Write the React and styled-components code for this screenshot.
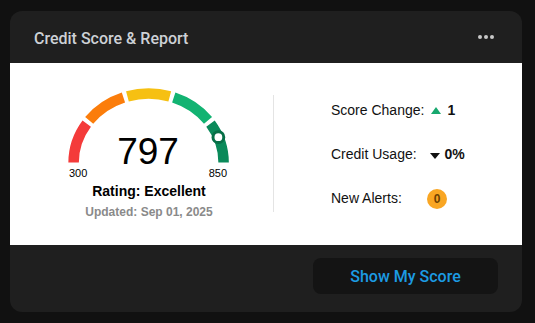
import React from "react";
import styled, { createGlobalStyle } from "styled-components";

const GlobalStyle = createGlobalStyle`
  html, body { margin: 0; padding: 0; background: #111111; }
  body { font-family: "Liberation Sans", Arial, sans-serif; }
  * { box-sizing: border-box; }
`;

const Page = styled.div`
  padding: 11px 13px 11px 10px;
`;

const Card = styled.section`
  width: 512px;
  height: 301px;
  background: #1f1f1f;
  border-radius: 12px;
  overflow: hidden;
  display: flex;
  flex-direction: column;
`;

const Header = styled.header`
  height: 52px;
  flex: none;
  display: flex;
  align-items: center;
  justify-content: space-between;
  padding: 0 28px 0 24px;
`;

const Title = styled.h2`
  margin: 0;
  padding-top: 3px;
  font-family: Roboto, "Liberation Sans", sans-serif;
  font-size: 16px;
  font-weight: 500;
  color: #cdd1d6;
`;

const MoreButton = styled.button`
  display: flex;
  gap: 2px;
  padding: 0;
  border: none;
  background: transparent;
  cursor: pointer;
`;

const Dot = styled.span`
  width: 4px;
  height: 4px;
  border-radius: 50%;
  background: #c8c8c8;
`;

const Body = styled.div`
  height: 182px;
  flex: none;
  background: #ffffff;
  display: flex;
  align-items: flex-start;
  padding-left: 54px;
`;

const GaugeBlock = styled.div`
  width: 170px;
  margin-top: 19px;
  display: flex;
  flex-direction: column;
  align-items: center;
`;

const GaugeWrap = styled.div`
  position: relative;
  width: 170px;
  height: 82px;
`;

const ScoreValue = styled.div`
  position: absolute;
  left: 0;
  right: 2px;
  top: 51px;
  text-align: center;
  font-size: 37px;
  line-height: 37px;
  color: #000;
`;

const RangeRow = styled.div`
  width: 100%;
  margin-top: 2px;
  display: flex;
  justify-content: space-between;
  padding: 0 7px 0 5px;
  font-size: 11px;
  line-height: 14px;
  color: #000;
`;

const Rating = styled.div`
  margin-top: 3px;
  font-size: 14px;
  line-height: 17px;
  font-weight: 700;
  color: #000;
`;

const Updated = styled.div`
  margin-top: 5px;
  font-size: 12px;
  line-height: 15px;
  font-weight: 700;
  color: #8a8a8a;
`;

const Divider = styled.div`
  width: 1px;
  height: 117px;
  margin: 32px 0 0 39px;
  background: #e4e4e4;
`;

const Stats = styled.div`
  margin: 37px 0 0 57px;
  display: grid;
  grid-template-columns: 96px auto;
  grid-auto-rows: 20px;
  row-gap: 24px;
  align-items: center;
  font-size: 14px;
  line-height: 20px;
  color: #111;
`;

const Label = styled.span``;

const Value = styled.span`
  font-weight: 700;
  white-space: nowrap;
`;

const Triangle = styled.span`
  display: inline-block;
  width: 0;
  height: 0;
  vertical-align: baseline;
  border-left: 5.5px solid transparent;
  border-right: 5.5px solid transparent;
  ${(p) =>
    p.$up
      ? `border-bottom: 7px solid #17a86e; margin: 0 7px 1px 3.5px;`
      : `border-top: 6px solid #111; margin: 0 5px 0 2.5px;`}
`;

const Badge = styled.span`
  display: inline-flex;
  align-items: center;
  justify-content: center;
  width: 20px;
  height: 20px;
  border-radius: 50%;
  background: #f9a623;
  color: #6e3f00;
  font-size: 12px;
  font-weight: 700;
`;

const Footer = styled.footer`
  flex: 1;
  display: flex;
  justify-content: flex-end;
  align-items: flex-start;
  padding: 13px 24px 0 0;
`;

const ShowButton = styled.button`
  width: 185px;
  height: 36px;
  border: none;
  border-radius: 8px;
  background: #141414;
  color: #1c9be3;
  font-family: Roboto, "Liberation Sans", sans-serif;
  font-size: 16px;
  font-weight: 500;
  cursor: pointer;
`;

const CX = 84.6;
const CY = 80.5;
const RX = 75;
const RY = 69;

const pt = (deg) => {
  const r = (deg * Math.PI) / 180;
  return [CX + RX * Math.cos(r), CY - RY * Math.sin(r)];
};

const arcPath = (a, b) => {
  const [x1, y1] = pt(a);
  const [x2, y2] = pt(b);
  return `M ${x1.toFixed(2)} ${y1.toFixed(2)} A ${RX} ${RY} 0 0 1 ${x2.toFixed(2)} ${y2.toFixed(2)}`;
};

const SEGMENTS = [
  { from: 180, to: 145.6, color: "#f43b3a" },
  { from: 142.4, to: 109.6, color: "#fb7d0b" },
  { from: 106.4, to: 73.6, color: "#f6c012" },
  { from: 70.4, to: 37.6, color: "#12b372" },
  { from: 34.4, to: 0, color: "#0a8a5a" },
];

function Gauge() {
  const [mx, my] = pt(21.5);
  return (
    <svg width="170" height="82" viewBox="0 0 170 82" aria-hidden="true">
      {SEGMENTS.map((s) => (
        <path
          key={s.color}
          d={arcPath(s.from, s.to)}
          fill="none"
          stroke={s.color}
          strokeWidth="10.5"
        />
      ))}
      <circle cx={mx} cy={my} r="5.4" fill="#ffffff" stroke="#076f47" strokeWidth="3" />
    </svg>
  );
}

export default function App() {
  return (
    <>
      <GlobalStyle />
      <Page>
        <Card>
          <Header>
            <Title>Credit Score &amp; Report</Title>
            <MoreButton aria-label="More options">
              <Dot />
              <Dot />
              <Dot />
            </MoreButton>
          </Header>
          <Body>
            <GaugeBlock>
              <GaugeWrap>
                <Gauge />
                <ScoreValue>797</ScoreValue>
              </GaugeWrap>
              <RangeRow>
                <span>300</span>
                <span>850</span>
              </RangeRow>
              <Rating>Rating: Excellent</Rating>
              <Updated>Updated: Sep 01, 2025</Updated>
            </GaugeBlock>
            <Divider />
            <Stats>
              <Label>Score Change:</Label>
              <Value>
                <Triangle $up />1
              </Value>
              <Label>Credit Usage:</Label>
              <Value>
                <Triangle />0%
              </Value>
              <Label>New Alerts:</Label>
              <Value>
                <Badge>0</Badge>
              </Value>
            </Stats>
          </Body>
          <Footer>
            <ShowButton>Show My Score</ShowButton>
          </Footer>
        </Card>
      </Page>
    </>
  );
}
